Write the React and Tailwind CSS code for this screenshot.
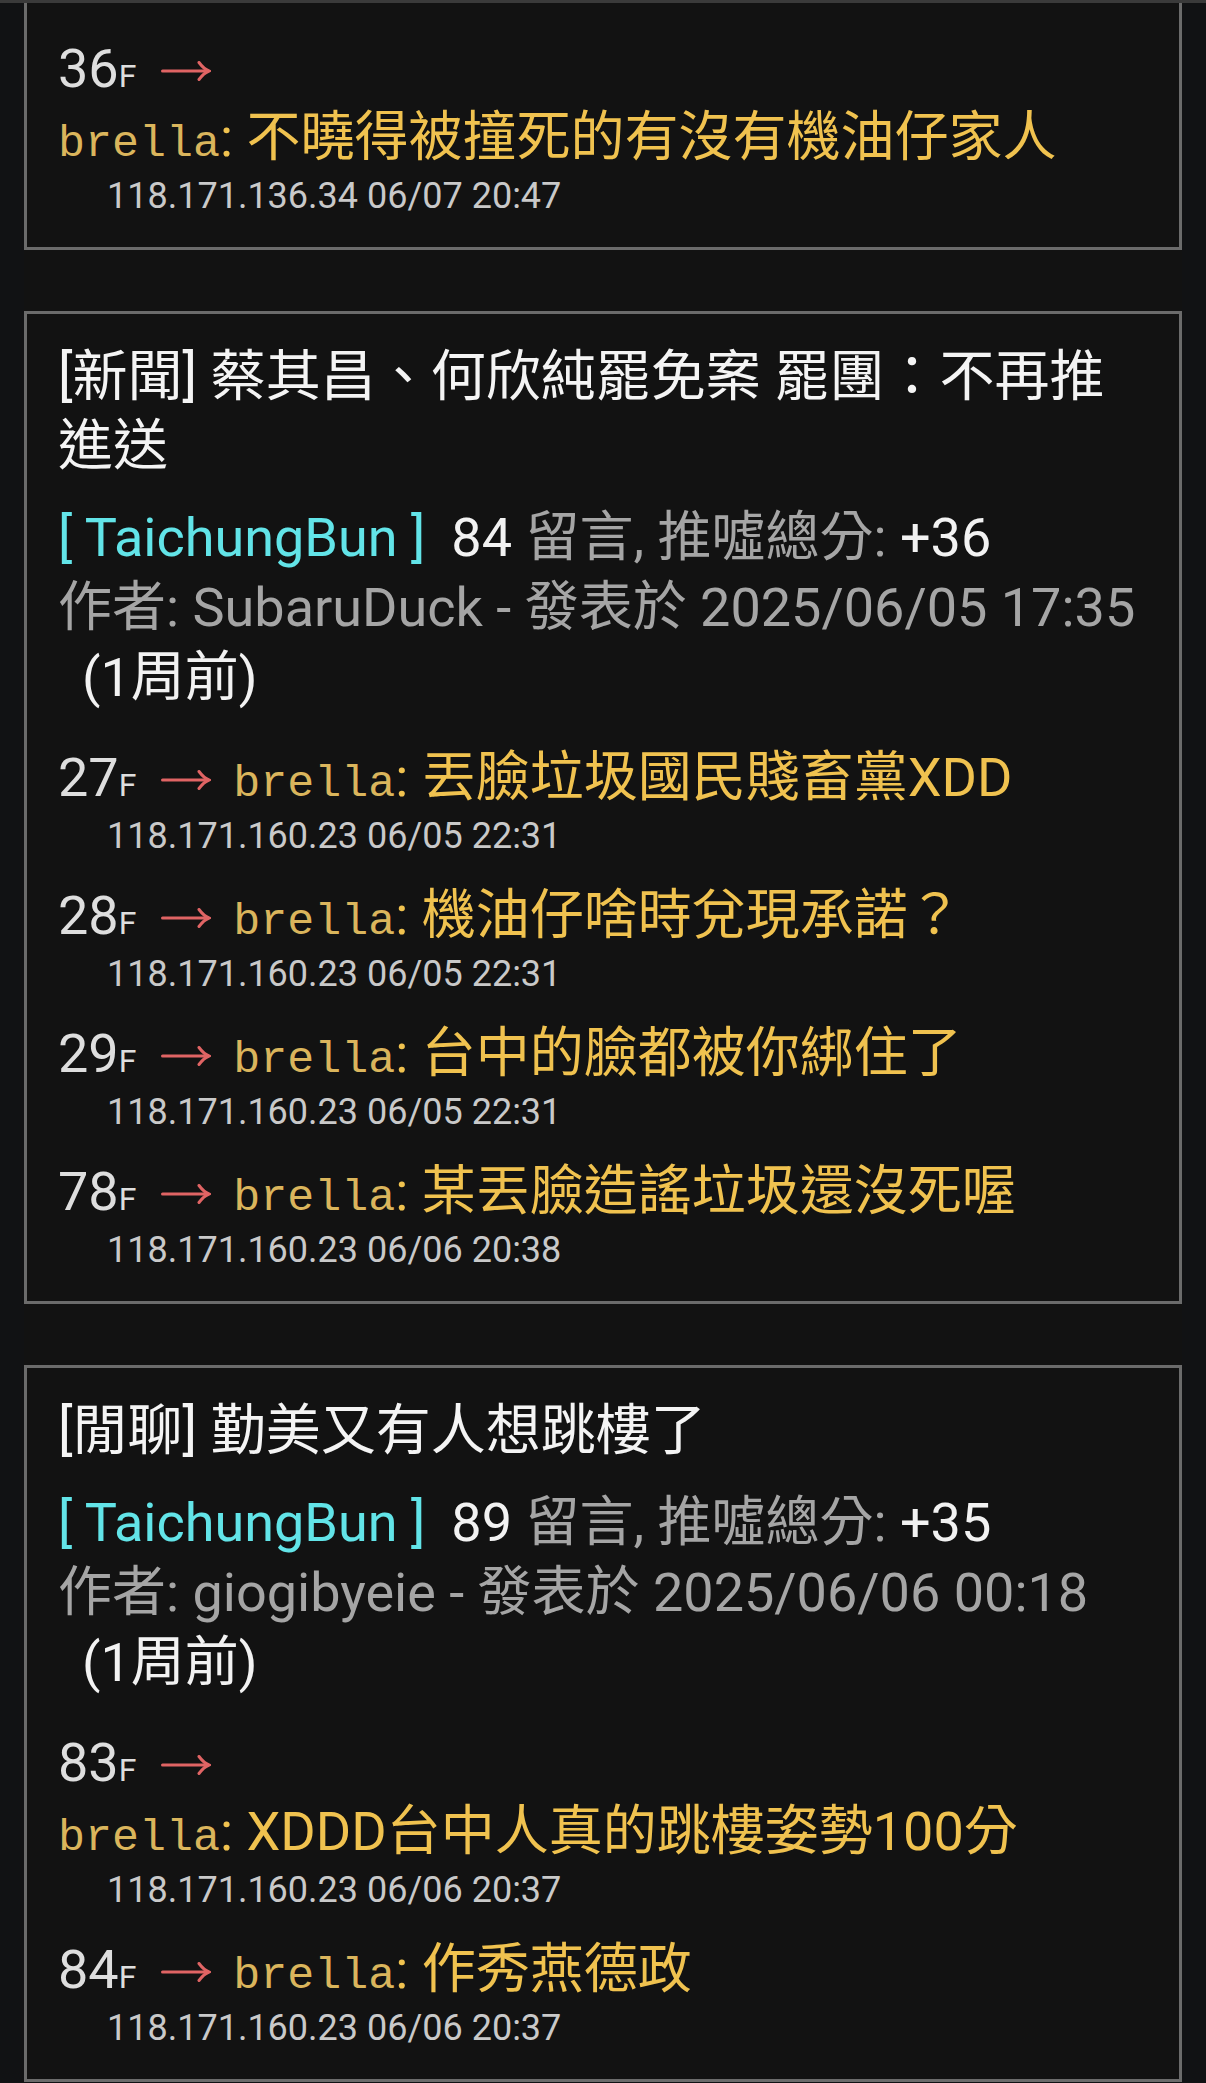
import React from 'react';

const sans = { fontFamily: 'Roboto, "Noto Sans CJK TC", sans-serif' };
const mono = { fontFamily: '"Liberation Mono", "Noto Sans CJK TC", monospace' };

const posts = [
  {
    id: 1,
    cut: true,
    comments: [
      { floor: 36, user: 'brella', text: '不曉得被撞死的有沒有機油仔家人', ip: '118.171.136.34 06/07 20:47' }
    ]
  },
  {
    id: 2,
    title: '[新聞] 蔡其昌、何欣純罷免案 罷團：不再推進送',
    board: 'TaichungBun',
    count: 84,
    score: '+36',
    author: 'SubaruDuck',
    date: '2025/06/05 17:35',
    comments: [
      { floor: 27, user: 'brella', text: '丟臉垃圾國民賤畜黨XDD', ip: '118.171.160.23 06/05 22:31' },
      { floor: 28, user: 'brella', text: '機油仔啥時兌現承諾？', ip: '118.171.160.23 06/05 22:31' },
      { floor: 29, user: 'brella', text: '台中的臉都被你綁住了', ip: '118.171.160.23 06/05 22:31' },
      { floor: 78, user: 'brella', text: '某丟臉造謠垃圾還沒死喔', ip: '118.171.160.23 06/06 20:38' }
    ]
  },
  {
    id: 3,
    title: '[閒聊] 勤美又有人想跳樓了',
    board: 'TaichungBun',
    count: 89,
    score: '+35',
    author: 'giogibyeie',
    date: '2025/06/06 00:18',
    comments: [
      { floor: 83, user: 'brella', text: 'XDDD台中人真的跳樓姿勢100分', ip: '118.171.160.23 06/06 20:37' },
      { floor: 84, user: 'brella', text: '作秀燕德政', ip: '118.171.160.23 06/06 20:37' }
    ]
  }
];

const Arrow = () => (
  <svg
    width="50"
    height="20"
    viewBox="0 0 50 20"
    className="ml-[11px] mr-[9px] mb-[4px] inline-block"
    fill="none"
    stroke="#e06464"
    strokeWidth="3"
    strokeLinecap="round"
  >
    <path d="M1.5 10H47" />
    <path d="M38 1.5C41 5.5 44 8.5 48 10C44 11.5 41 14.5 38 18.5" />
  </svg>
);

const Comment = ({ c }) => (
  <div>
    <div className="text-[54px] leading-[69px]">
      <span className="text-[#dedede]">
        {c.floor}
        <span className="text-[32px] leading-none">F</span>
      </span>{' '}
      <Arrow />{' '}
      <span className="inline-block">
        <span className="text-[45px] leading-none text-[#dab55c]" style={mono}>{c.user}</span>
        <span className="text-[#f0c24f]">: {c.text}</span>
      </span>
    </div>
    <div className="pl-[49px] text-[36px] leading-[48px] text-[#c9c9c9]">{c.ip}</div>
  </div>
);

const PostCard = ({ post }) => (
  <div
    className={
      post.cut
        ? 'border-x-[3px] border-b-[3px] border-[#6b6b6b] bg-[#121212] px-[31px] pt-[31px] pb-[27px]'
        : 'mt-[61px] border-[3px] border-[#6b6b6b] bg-[#121212] px-[31px] pt-[28px] pb-[27px]'
    }
  >
    {post.title && (
      <>
        <div className="text-[55px] leading-[69px] text-[#f4f4f4]">{post.title}</div>
        <div className="mt-[23px] text-[54px] leading-[70px]">
          <span className="text-[#62e4e8]">[ {post.board} ]</span>
          <span className="ml-[26px] text-[#f2f2f2]">{post.count}</span>
          <span className="text-[#a5a5a5]"> 留言, 推噓總分: </span>
          <span className="text-[#f2f2f2]">{post.score}</span>
          <br />
          <span className="text-[#a5a5a5]">
            作者: {post.author} - 發表於 {post.date}
          </span>{' '}
          <span className="inline-block pl-[24px] text-[#f2f2f2]">(1周前)</span>
        </div>
      </>
    )}
    <div className={post.title ? 'mt-[30px] flex flex-col gap-[21px]' : 'flex flex-col gap-[21px]'}>
      {post.comments.map(c => (
        <Comment key={c.floor} c={c} />
      ))}
    </div>
  </div>
);

export default function App() {
  return (
    <div className="min-h-screen w-full bg-[#111214]" style={sans}>
      <div className="h-[3px] w-full bg-[#3a3a3a]" />
      <div className="mx-6 bg-[#121212]">
        {posts.map(p => (
          <PostCard key={p.id} post={p} />
        ))}
      </div>
    </div>
  );
}
